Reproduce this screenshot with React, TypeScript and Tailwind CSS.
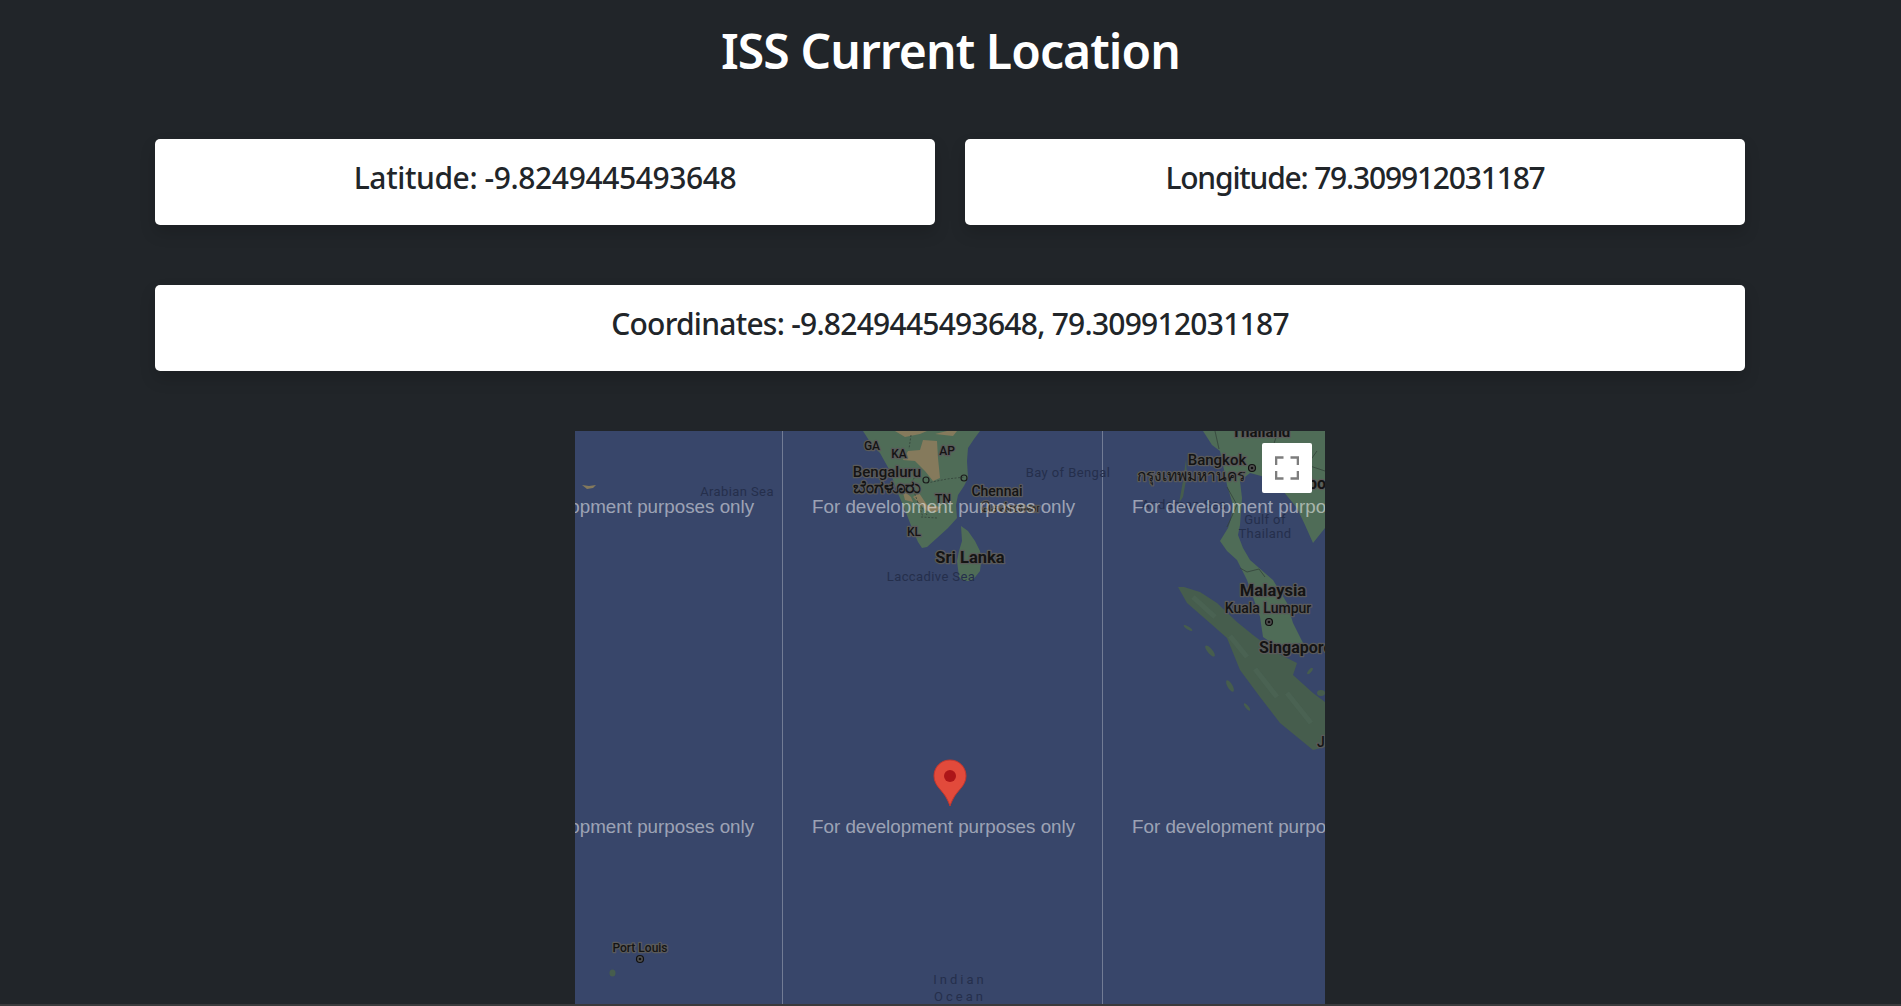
import React from 'react';

const LAND = '#4f6c57';
const LAND_DARK = '#465d4d';
const TAN = '#857a5c';
const WATER = '#38466a';
const SEA_TEXT = '#252f4c';

type MapLabel = {
  text: string;
  x: number;
  y: number;
  size: number;
  weight?: number;
  anchor?: 'start' | 'middle';
};

const placeLabels: MapLabel[] = [
  { text: 'GA', x: 297, y: 19, size: 12, weight: 500 },
  { text: 'KA', x: 324, y: 27, size: 12, weight: 500 },
  { text: 'AP', x: 372, y: 24, size: 12, weight: 500 },
  { text: 'TN', x: 368, y: 72, size: 12, weight: 500 },
  { text: 'KL', x: 339, y: 105, size: 12, weight: 500 },
  { text: 'Bengaluru', x: 312, y: 46, size: 15, weight: 500 },
  { text: 'ಬೆಂಗಳೂರು', x: 312, y: 62, size: 18, weight: 700 },
  { text: 'Chennai', x: 422, y: 65, size: 14, weight: 500 },
  { text: 'சென்னை', x: 435, y: 81, size: 14, weight: 500 },
  { text: 'Sri Lanka', x: 395, y: 132, size: 16.5, weight: 700 },
  { text: 'Thailand', x: 686, y: 6, size: 15, weight: 700 },
  { text: 'Bangkok', x: 642, y: 34, size: 15, weight: 500 },
  { text: 'กรุงเทพมหานคร', x: 616, y: 50, size: 15.5, weight: 500 },
  { text: 'Malaysia', x: 698, y: 165, size: 16.5, weight: 700 },
  { text: 'Kuala Lumpur', x: 693, y: 182, size: 14, weight: 500 },
  { text: 'Singapore', x: 684, y: 222, size: 16, weight: 700, anchor: 'start' },
  { text: 'Port Louis', x: 65, y: 521, size: 12, weight: 500 },
  { text: 'Cambodia', x: 700, y: 58, size: 16, weight: 700, anchor: 'start' },
  { text: 'Jambi', x: 742, y: 316, size: 14, weight: 500, anchor: 'start' },
];

const seaLabels: MapLabel[] = [
  { text: 'Arabian Sea', x: 162, y: 65, size: 13 },
  { text: 'Bay of Bengal', x: 493, y: 46, size: 13 },
  { text: 'Laccadive Sea', x: 356, y: 150, size: 13 },
  { text: 'Andaman Sea', x: 609, y: 78, size: 13 },
  { text: 'Gulf of', x: 690, y: 93, size: 13 },
  { text: 'Thailand', x: 690, y: 107, size: 13 },
];

const watermarks = [
  { x: -84, y: 82 },
  { x: 237, y: 82 },
  { x: 557, y: 82 },
  { x: -84, y: 402 },
  { x: 237, y: 402 },
  { x: 557, y: 402 },
];

const MapPicture = () => (
  <svg viewBox="0 0 750 573" preserveAspectRatio="xMinYMin slice" className="block h-full w-full" style={{ fontFamily: 'Roboto, sans-serif' }}>
    <rect width="750" height="573" fill={WATER} />

    {/* India */}
    <path d="M288 0 L297 14 L305 22 L315 40 L321 58 L328 74 L337 97 L343 111 L347 117 L352 116 L362 107 L373 97 L382 87 L381 74 L383 64 L389 55 L393 47 L392 30 L393 17 L399 8 L405 0 Z" fill={LAND} />
    <path d="M348 9 L362 10 L363 27 L365 47 L358 50 L350 40 L340 30 L328 29 L333 20 L345 19 Z" fill={TAN} />
    <path d="M320 0 L330 6 L345 3 L352 0 Z M372 0 L360 3 L378 5 L382 0 Z" fill={TAN} />
    <path d="M338 66 L346 74 L352 80 L362 81 L366 76 L352 74 L344 62 Z" fill={TAN} />
    <path d="M327 58 L336 66 L338 71 L330 69 Z" fill={TAN} />
    <path d="M336 4 L334 18 M345 38 L336 52 L348 86 M352 52 L372 48 L390 46 M346 86 L362 87 M352 84 L342 70" fill="none" stroke="#33433a" strokeWidth="0.8" strokeDasharray="2 1.5" />
    {/* Sri Lanka */}
    <path d="M386 95 L393 100 L400 110 L405 120 L406 132 L405 140 L397 150 L388 150 L384 146 L382 130 L384 120 L387 110 Z" fill={LAND} />
    {/* Lakshadweep bit */}
    <path d="M7 54 L14 55 L21 54 L18 57 L12 58 Z" fill={TAN} />

    {/* Indochina */}
    <path d="M628 0 L637 14 L645 20 L648 34 L652 54 L658 74 L656 88 L653 97 L645 110 L652 120 L662 129 L672 149 L685 186 L688 206 L700 214 L728 212 L718 192 L712 172 L698 149 L675 129 L668 117 L663 104 L665 94 L667 67 L665 50 L675 42 L690 46 L708 60 L722 77 L730 94 L738 112 L750 97 L750 0 Z" fill={LAND} />
    <path d="M611 28 L608 50 L604 72 L608 66 L612 44 Z" fill={LAND_DARK} />
    <path d="M640 0 L644 18 M652 56 L662 74 L652 96 M665 137 L672 141 L684 138 L690 146 M742 20 L732 34 L750 40 M703 0 L696 22" fill="none" stroke="#33433a" strokeWidth="0.8" />
    {/* Sumatra */}
    <path d="M603 156 L609 156 L625 161 L642 172 L662 191 L678 204 L702 222 L722 232 L718 244 L738 262 L750 271 L750 316 L738 319 L705 292 L685 266 L665 239 L652 207 L635 192 L612 172 Z" fill={LAND_DARK} />
    <path d="M618 166 L640 186 M655 205 L672 226 M680 238 L702 266 M712 262 L736 292" fill="none" stroke="#4d6656" strokeWidth="5" opacity="0.6" />
    <ellipse cx="613" cy="197" rx="5" ry="1.5" transform="rotate(32 613 197)" fill={LAND_DARK} />
    <ellipse cx="635" cy="220" rx="7" ry="2.5" transform="rotate(50 635 220)" fill={LAND_DARK} />
    <ellipse cx="655" cy="255" rx="6.5" ry="2.5" transform="rotate(60 655 255)" fill={LAND_DARK} />
    <ellipse cx="672" cy="276" rx="4.5" ry="1.5" transform="rotate(50 672 276)" fill={LAND_DARK} />
    <ellipse cx="735" cy="240" rx="4" ry="1.5" transform="rotate(-50 735 240)" fill={LAND_DARK} />
    <ellipse cx="746" cy="262" rx="4" ry="3" fill={LAND_DARK} />
    {/* Mauritius */}
    <ellipse cx="37.5" cy="542" rx="3" ry="3.5" fill={LAND_DARK} />

    {/* Tile edges */}
    <rect x="207" y="0" width="1" height="573" fill="#727c95" />
    <rect x="527" y="0" width="1" height="573" fill="#727c95" />

    {seaLabels.map((label) => (
      <text key={label.text + label.y} x={label.x} y={label.y} fontSize={label.size} fill={SEA_TEXT} textAnchor="middle" letterSpacing="0.4">
        {label.text}
      </text>
    ))}
    <text x="385" y="553" fontSize="13" fill={SEA_TEXT} textAnchor="middle" letterSpacing="3">Indian</text>
    <text x="385" y="570" fontSize="13" fill={SEA_TEXT} textAnchor="middle" letterSpacing="3">Ocean</text>

    {placeLabels.map((label) => (
      <text
        key={label.text}
        x={label.x}
        y={label.y}
        fontSize={label.size}
        fontWeight={label.weight}
        textAnchor={label.anchor ?? 'middle'}
        fill="#141414"
        stroke="#5a5a5a"
        strokeWidth="2.5"
        strokeLinejoin="round"
        paintOrder="stroke"
      >
        {label.text}
      </text>
    ))}

    {/* City dots */}
    <circle cx="351" cy="49" r="3" fill="none" stroke="#1c1c1c" strokeWidth="1.2" />
    <circle cx="389" cy="47" r="3" fill="none" stroke="#1c1c1c" strokeWidth="1.2" />
    <circle cx="677" cy="37" r="3.5" fill="#4f4f4f" stroke="#111" strokeWidth="1.2" />
    <circle cx="677" cy="37" r="1.3" fill="#111" />
    <circle cx="694" cy="191" r="3.5" fill="#4f4f4f" stroke="#111" strokeWidth="1.2" />
    <circle cx="694" cy="191" r="1.3" fill="#111" />
    <circle cx="65" cy="528" r="3.5" fill="#4f4f4f" stroke="#111" strokeWidth="1.2" />
    <circle cx="65" cy="528" r="1.3" fill="#111" />

    {/* Watermarks */}
    {watermarks.map((mark) => (
      <text key={`${mark.x}-${mark.y}`} x={mark.x} y={mark.y} fontSize="18.8" fill="#ffffff" fillOpacity="0.52" style={{ fontFamily: '"Liberation Sans", Arial, sans-serif' }}>
        For development purposes only
      </text>
    ))}

    {/* Pin */}
    <path d="M375 329 C365.5 329 359 336.5 359 345 C359 355 368 359.5 372 368 C373.5 371 374.3 373 375 375 C375.7 373 376.5 371 378 368 C382 359.5 391 355 391 345 C391 336.5 384.5 329 375 329 Z" fill="#e24a3b" stroke="#c5362c" strokeWidth="1" />
    <circle cx="375" cy="345" r="6" fill="#ad1518" />
  </svg>
);

const InfoCard = ({ children, className = '' }: { children: React.ReactNode; className?: string }) => (
  <div className={`flex h-[86px] justify-center rounded-[5px] bg-white pt-[17px] text-[30px] leading-[44px] font-medium text-[#212529] shadow-[0_8px_16px_rgba(0,0,0,0.15)] ${className}`}>
    {children}
  </div>
);

export default function App() {
  return (
    <div className="flex h-screen flex-col overflow-hidden bg-[#212529] font-['Noto_Sans',sans-serif]">
      <h1 className="pt-[19px] text-center text-[48px] leading-[64px] font-semibold tracking-[-0.9px] text-white">
        ISS Current Location
      </h1>

      <div className="mt-[56px] ml-[155px] grid w-[1590px] grid-cols-2 gap-x-[30px] gap-y-[60px]">
        <InfoCard className="tracking-[-0.4px]">Latitude: -9.8249445493648</InfoCard>
        <InfoCard className="tracking-[-1.2px]">Longitude: 79.309912031187</InfoCard>
        <InfoCard className="col-span-2 tracking-[-0.75px]">Coordinates: -9.8249445493648, 79.309912031187</InfoCard>
      </div>

      <div className="relative mt-[60px] ml-[575px] min-h-0 w-[750px] flex-1 overflow-hidden">
        <MapPicture />
        <button className="absolute top-[12px] left-[687px] flex h-[50px] w-[50px] items-center justify-center rounded-[2px] bg-white">
          <svg width="24" height="24" viewBox="0 0 24 24" fill="none" stroke="#7d7d7d" strokeWidth="2.6">
            <path d="M1 9 V1.5 H8.5 M15.5 1.5 H23 V9 M23 15 V22.5 H15.5 M8.5 22.5 H1 V15" />
          </svg>
        </button>
      </div>
      <div className="h-[2px] bg-[#3a3a3c]" />
    </div>
  );
}
